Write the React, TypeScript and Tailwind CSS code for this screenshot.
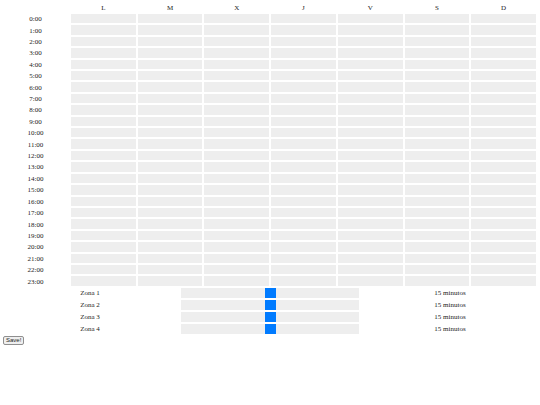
const days = ["L", "M", "X", "J", "V", "S", "D"];
const hours = Array.from({ length: 24 }, (_, i) => `${i}:00`);
const zones = ["Zona 1", "Zona 2", "Zona 3", "Zona 4"];

function ZoneSlider() {
    return (
        <div className="flex h-full justify-center bg-[#eeeeee]">
            <div className="h-full w-[11px] bg-[#007bff]"></div>
        </div>
    );
}

export default function App() {
    return (
        <div className="w-[540px] h-[405px] bg-white text-[#222] font-['Liberation_Serif',serif] text-[7px] leading-none">
            {/* Weekly grid */}
            <div className="grid grid-cols-[67px_repeat(7,64.71px)] grid-rows-[10px_repeat(24,9.42px)] gap-[2px] pl-[2px] pt-[2px]">
                <div></div>
                {days.map((d) => (
                    <div key={d} className="flex items-center justify-center pt-[2px]">
                        {d}
                    </div>
                ))}
                {hours.map((h) => (
                    <Row key={h} label={h} />
                ))}
            </div>

            {/* Zones */}
            <div className="mt-[2px] flex flex-col gap-[2px] text-[7px]">
                {zones.map((z) => (
                    <div key={z} className="grid h-[10px] grid-cols-3">
                        <div className="flex items-center justify-center pt-[1px]">{z}</div>
                        <div className="px-[1px]">
                            <ZoneSlider />
                        </div>
                        <div className="flex items-center justify-center pt-[1px]">15 minutos</div>
                    </div>
                ))}
            </div>

            <button className="ml-[3px] mt-[2px] flex h-[9px] items-center rounded-[2px] border border-[#8f8f8f] bg-[#efefef] px-[2px] text-[6px] font-['Liberation_Sans',sans-serif]">
                Save!
            </button>
        </div>
    );
}

function Row({ label }: { label: string }) {
    return (
        <>
            <div className="flex items-center justify-center pt-[2px]">{label}</div>
            {days.map((d) => (
                <div key={d} className="bg-[#eeeeee]"></div>
            ))}
        </>
    );
}
